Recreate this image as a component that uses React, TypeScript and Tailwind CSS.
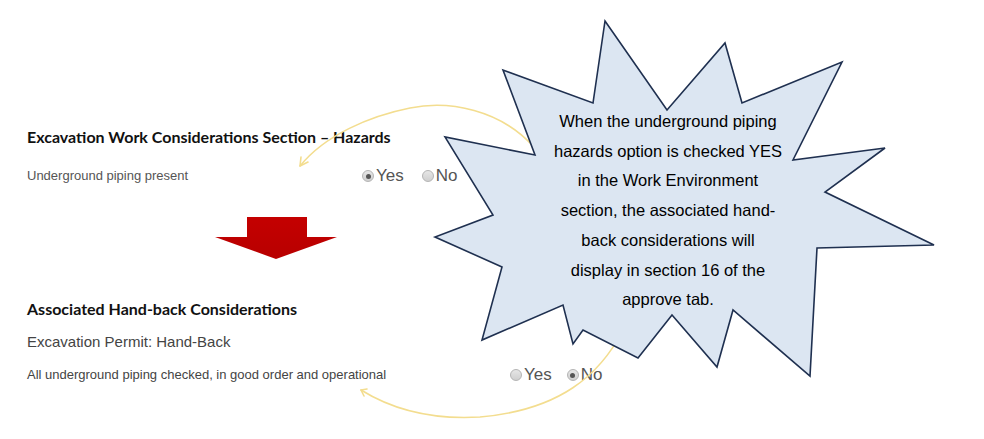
import React from "react";

function Radio({ checked, label }: { checked?: boolean; label: string }) {
  return (
    <div className="flex items-center gap-[2px]">
      <span className="w-[12px] h-[12px] rounded-full border border-[#b4b4b4] bg-gradient-to-b from-[#e6e6e6] to-[#cfcfcf] flex items-center justify-center">
        {checked && <span className="w-[5px] h-[5px] rounded-full bg-[#555]" />}
      </span>
      <span className="text-[17px] text-[#555] leading-5">{label}</span>
    </div>
  );
}

const burst =
  "605,21 667,110 725,43 742,103 842,62 793,160 885,148 825,192 934,245 817,248 810,376 733,310 717,367 672,315 638,358 583,330 573,344 563,305 482,340 502,267 435,237 493,215 445,137 535,155 503,70 593,103";

export default function App() {
  return (
    <div
      className="relative w-[984px] h-[439px] overflow-hidden bg-white"
      style={{ fontFamily: '"Liberation Sans", Arial, sans-serif' }}>
      <div className="flex flex-col pl-[27px] pt-[128px]">
        <h2
          className="text-[16px] font-bold leading-[18px] text-[#111]"
          style={{ fontFamily: "Lato, sans-serif" }}>
          Excavation Work Considerations Section – Hazards
        </h2>
        <div className="flex items-center mt-[20px] h-5">
          <span className="w-[335px] text-[13px] text-[#555]">Underground piping present</span>
          <div className="flex items-center gap-[18px]">
            <Radio checked label="Yes" />
            <Radio label="No" />
          </div>
        </div>
        <svg width="124" height="43" viewBox="0 0 124 43" className="mt-[31px] ml-[188px]">
          <defs>
            <linearGradient id="red" x1="0" y1="0" x2="0" y2="1">
              <stop offset="0" stopColor="#c40000" />
              <stop offset="1" stopColor="#b80000" />
            </linearGradient>
          </defs>
          <polygon points="32,0 92,0 92,20 122,20 61,42 0,20 32,20" fill="url(#red)" />
        </svg>
        <h2
          className="text-[16px] font-bold leading-[18px] text-[#111] mt-[40px]"
          style={{ fontFamily: "Lato, sans-serif" }}>
          Associated Hand-back Considerations
        </h2>
        <div className="text-[15px] leading-[18px] text-[#444] mt-[15px]">
          Excavation Permit: Hand-Back
        </div>
        <div className="flex items-center mt-[14px] h-5">
          <span className="w-[483px] text-[13px] text-[#444]">
            All underground piping checked, in good order and operational
          </span>
          <div className="flex items-center gap-[15px]">
            <Radio label="Yes" />
            <Radio checked label="No" />
          </div>
        </div>
      </div>

      <svg
        className="absolute inset-0 pointer-events-none"
        width="984"
        height="439"
        viewBox="0 0 984 439">
        <g fill="none" stroke="#f3dd8f" strokeWidth="1.6" strokeLinecap="round">
          <path d="M533,146 C500,110 450,100 410,108 C370,116 325,135 300,166" />
          <path d="M300,166 L301,157 M300,166 L308,162" />
          <path d="M623,330 C600,375 560,410 480,417 C430,420 390,408 361,390" />
          <path d="M361,390 L367,389 M361,390 L364,396" />
        </g>
        <polygon points={burst} fill="#dce6f2" stroke="#1f3050" strokeWidth="1.6" strokeLinejoin="miter" />
      </svg>

      <div
        className="absolute left-[528px] top-[107px] w-[280px] whitespace-nowrap text-center text-[16.5px] leading-[29.7px] text-black"
        style={{ fontFamily: '"Liberation Sans", Arial, sans-serif' }}>
        When the underground piping
        <br />
        hazards option is checked YES
        <br />
        in the Work Environment
        <br />
        section, the associated hand-
        <br />
        back considerations will
        <br />
        display in section 16 of the
        <br />
        approve tab.
      </div>
    </div>
  );
}
